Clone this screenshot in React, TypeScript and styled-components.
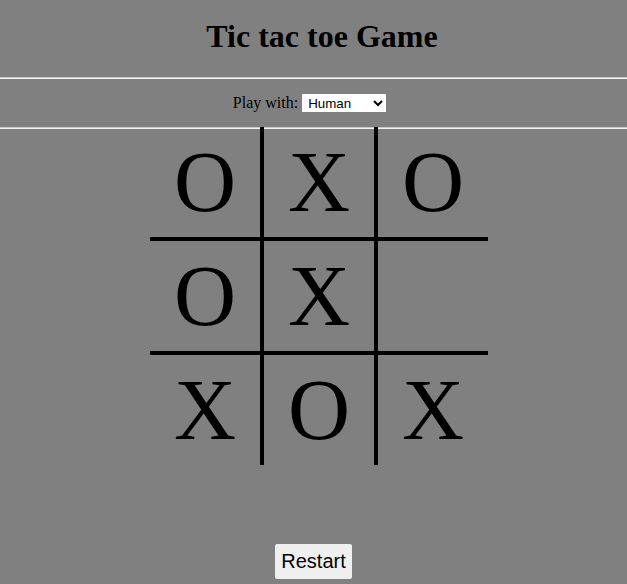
import React, { useState } from "react";
import styled, { createGlobalStyle } from "styled-components";

const GlobalStyle = createGlobalStyle`
  html, body {
    margin: 0;
    padding: 0;
    background-color: #808080;
    font-family: "Liberation Serif", "Times New Roman", serif;
    color: #000;
  }
`;

const Page = styled.div`
  min-height: 584px;
  display: flex;
  flex-direction: column;
  align-items: center;
`;

const Title = styled.h1`
  font-size: 32px;
  font-weight: bold;
  margin: 18px 0 22px;
  padding-left: 17px;
  line-height: 37px;
  text-align: center;
`;

const Divider = styled.hr`
  width: 100%;
  height: 0;
  margin: 0;
  border: none;
  border-top: 1px solid #c8c8c8;
  border-bottom: 1px solid #f4f4f4;
`;

const Settings = styled.div`
  height: 48px;
  padding-right: 8px;
  display: flex;
  align-items: center;
  justify-content: center;
  gap: 4px;
  font-size: 16px;
`;

const Select = styled.select`
  width: 84px;
  height: 18px;
  font-family: "Liberation Sans", Arial, sans-serif;
  font-size: 13.33px;
  background: #fff;
  border: none;
  padding: 0 0 0 2px;
`;

const Board = styled.div`
  margin: -2px 0 0 11px;
  display: grid;
  grid-template-columns: repeat(3, auto);
`;

const Cell = styled.div<{ $right: boolean; $bottom: boolean }>`
  width: 110px;
  height: 110px;
  display: flex;
  align-items: center;
  justify-content: center;
  font-size: 86px;
  line-height: normal;
  border-right: ${(p) => (p.$right ? "4px solid #000" : "none")};
  border-bottom: ${(p) => (p.$bottom ? "4px solid #000" : "none")};
  cursor: pointer;
`;

const RestartButton = styled.button`
  margin-top: 79px;
  height: 35px;
  padding: 0 6px;
  font-family: "Liberation Sans", Arial, sans-serif;
  font-size: 20px;
  background: #efefef;
  border: none;
  border-radius: 2px;
  color: #000;
`;

const initial = ["O", "X", "O", "O", "X", "", "X", "O", "X"];

const App = () => {
  const [squares, setSquares] = useState<string[]>(initial);
  const [mode, setMode] = useState("human");

  return (
    <>
      <GlobalStyle />
      <Page>
        <Title>Tic tac toe Game</Title>
        <Divider />
        <Settings>
          Play with:
          <Select value={mode} onChange={(e) => setMode(e.target.value)}>
            <option value="human">Human</option>
            <option value="computer">Computer</option>
          </Select>
        </Settings>
        <Divider />
        <Board>
          {squares.map((s, i) => (
            <Cell key={i} $right={i % 3 !== 2} $bottom={i < 6}>
              {s}
            </Cell>
          ))}
        </Board>
        <RestartButton onClick={() => setSquares(Array(9).fill(""))}>
          Restart
        </RestartButton>
      </Page>
    </>
  );
};

export default App;
